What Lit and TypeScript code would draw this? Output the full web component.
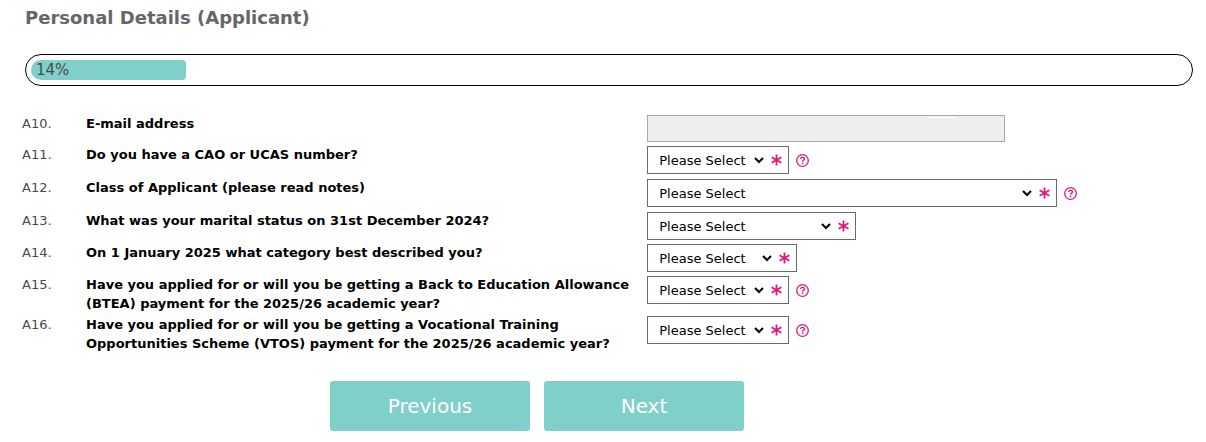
import { LitElement, html, css, svg, nothing } from "lit";
import { customElement, property } from "lit/decorators.js";
import { classMap } from "lit/directives/class-map.js";

type Size = "small" | "medium" | "large" | "full";

interface Question {
  code: string;
  label: string;
  kind: "email" | "select";
  size?: Size;
  help?: boolean;
}

const QUESTIONS: Question[] = [
  { code: "A10", label: "E-mail address", kind: "email" },
  { code: "A11", label: "Do you have a CAO or UCAS number?", kind: "select", size: "small", help: true },
  { code: "A12", label: "Class of Applicant (please read notes)", kind: "select", size: "full", help: true },
  { code: "A13", label: "What was your marital status on 31st December 2024?", kind: "select", size: "large" },
  { code: "A14", label: "On 1 January 2025 what category best described you?", kind: "select", size: "medium" },
  {
    code: "A15",
    label: "Have you applied for or will you be getting a Back to Education Allowance (BTEA) payment for the 2025/26 academic year?",
    kind: "select",
    size: "small",
    help: true,
  },
  {
    code: "A16",
    label: "Have you applied for or will you be getting a Vocational Training Opportunities Scheme (VTOS) payment for the 2025/26 academic year?",
    kind: "select",
    size: "small",
    help: true,
  },
];

const asterisk = svg`
  <path d="M5.5 0.5V11.5M0.6 3.2L10.4 8.8M10.4 3.2L0.6 8.8" fill="none" stroke="currentColor" stroke-width="1.8" />`;

const questionMark = svg`
  <circle cx="6.5" cy="6.5" r="5.8" fill="none" stroke="currentColor" stroke-width="1.3" />
  <path d="M4.7 5.1C4.7 3.9 5.5 3.4 6.5 3.4C7.6 3.4 8.4 4 8.4 5C8.4 6.3 6.5 6.3 6.5 7.8" fill="none" stroke="currentColor" stroke-width="1.4" />
  <rect x="5.8" y="8.6" width="1.5" height="1.5" fill="currentColor" />`;

@customElement("progress-bar")
export class ProgressBar extends LitElement {
  @property({ type: Number }) value = 0;

  static styles = css`
    :host { display: block; }
    .track {
      box-sizing: border-box;
      height: 32px;
      padding: 5px 54px 5px 5px;
      border: 1px solid #000;
      border-radius: 16px;
    }
    .fill {
      box-sizing: border-box;
      height: 20px;
      padding-left: 5px;
      border-radius: 10px 4px 4px 10px;
      background: #7fd0c9;
      color: #4a4a4a;
      font-size: 15px;
      line-height: 20px;
    }
  `;

  render() {
    return html`
      <div class="track" role="progressbar" aria-valuemin="0" aria-valuemax="100" aria-valuenow=${this.value}>
        <div class="fill" style="width: ${this.value}%">${this.value}%</div>
      </div>
    `;
  }
}

@customElement("app-root")
export class AppRoot extends LitElement {
  static styles = css`
    :host {
      display: block;
      background: #fff;
      color: #000;
      font-family: Verdana, "DejaVu Sans", sans-serif;
      font-size: 13px;
      line-height: 19px;
    }
    .head { padding: 6px 13px 0 25px; }
    .title {
      margin: 0 0 24px;
      color: #66666a;
      font-size: 18px;
      line-height: 24px;
      font-weight: bold;
    }
    .questions { padding: 28px 13px 0 22px; }
    .row {
      display: grid;
      grid-template-columns: 64px 36fr 35fr;
      align-items: start;
      padding-bottom: 2px;
    }
    .code { color: #4a4a4a; }
    .label { padding-right: 8px; font-weight: bold; }
    .control {
      display: flex;
      align-items: center;
      gap: 7px;
      padding: 1px 0;
    }
    .with-help { padding-bottom: 2px; }
    .email {
      box-sizing: border-box;
      width: 358px;
      height: 27px;
      border: 1px solid #a9a9a9;
      background: linear-gradient(#fff, #fff) 280px 1px / 28px 1px no-repeat #eee;
      font: inherit;
    }
    .box {
      box-sizing: border-box;
      display: flex;
      align-items: center;
      gap: 4px;
      height: 28px;
      padding: 0 6px 0 7px;
      border: 1px solid #6b6b6e;
    }
    .select {
      height: 24px;
      padding: 0;
      border: 0;
      background: transparent;
      color: #000;
      font-family: inherit;
      font-size: 13px;
    }
    .small { width: 112px; }
    .medium { width: 120px; }
    .large { width: 179px; }
    .full { width: 380px; }
    .star { flex: none; color: #e5177b; }
    .help {
      display: flex;
      padding: 0;
      border: 0;
      background: none;
      color: #e5177b;
      cursor: pointer;
    }
    .actions {
      display: flex;
      justify-content: center;
      gap: 14px;
      padding: 26px 132px 10px 0;
    }
    .button {
      width: 200px;
      height: 50px;
      padding: 0;
      border: 0;
      border-radius: 3px;
      background: #7fd0c9;
      color: #fff;
      font-family: inherit;
      font-size: 20px;
      cursor: pointer;
    }
  `;

  private renderControl(q: Question) {
    if (q.kind === "email") {
      return html`<input class="email" id=${q.code} type="email" disabled />`;
    }
    return html`
      <div class="box">
        <select class=${classMap({ select: true, [q.size ?? "small"]: true })} id=${q.code} required>
          <option value="">Please Select</option>
        </select>
        <svg class="star" width="11" height="12" viewBox="0 0 11 12" aria-hidden="true">${asterisk}</svg>
      </div>
      ${q.help
        ? html`<button class="help" type="button" aria-label="Help">
            <svg width="13" height="13" viewBox="0 0 13 13" aria-hidden="true">${questionMark}</svg>
          </button>`
        : nothing}
    `;
  }

  render() {
    return html`
      <header class="head">
        <h1 class="title">Personal Details (Applicant)</h1>
        <progress-bar .value=${14}></progress-bar>
      </header>
      <form>
        <div class="questions">
          ${QUESTIONS.map(
            (q) => html`
              <div class="row">
                <span class="code">${q.code}.</span>
                <label class="label" for=${q.code}>${q.label}</label>
                <div class=${classMap({ control: true, "with-help": !!q.help })}>${this.renderControl(q)}</div>
              </div>
            `
          )}
        </div>
        <div class="actions">
          <button class="button" type="button">Previous</button>
          <button class="button" type="button">Next</button>
        </div>
      </form>
    `;
  }
}
